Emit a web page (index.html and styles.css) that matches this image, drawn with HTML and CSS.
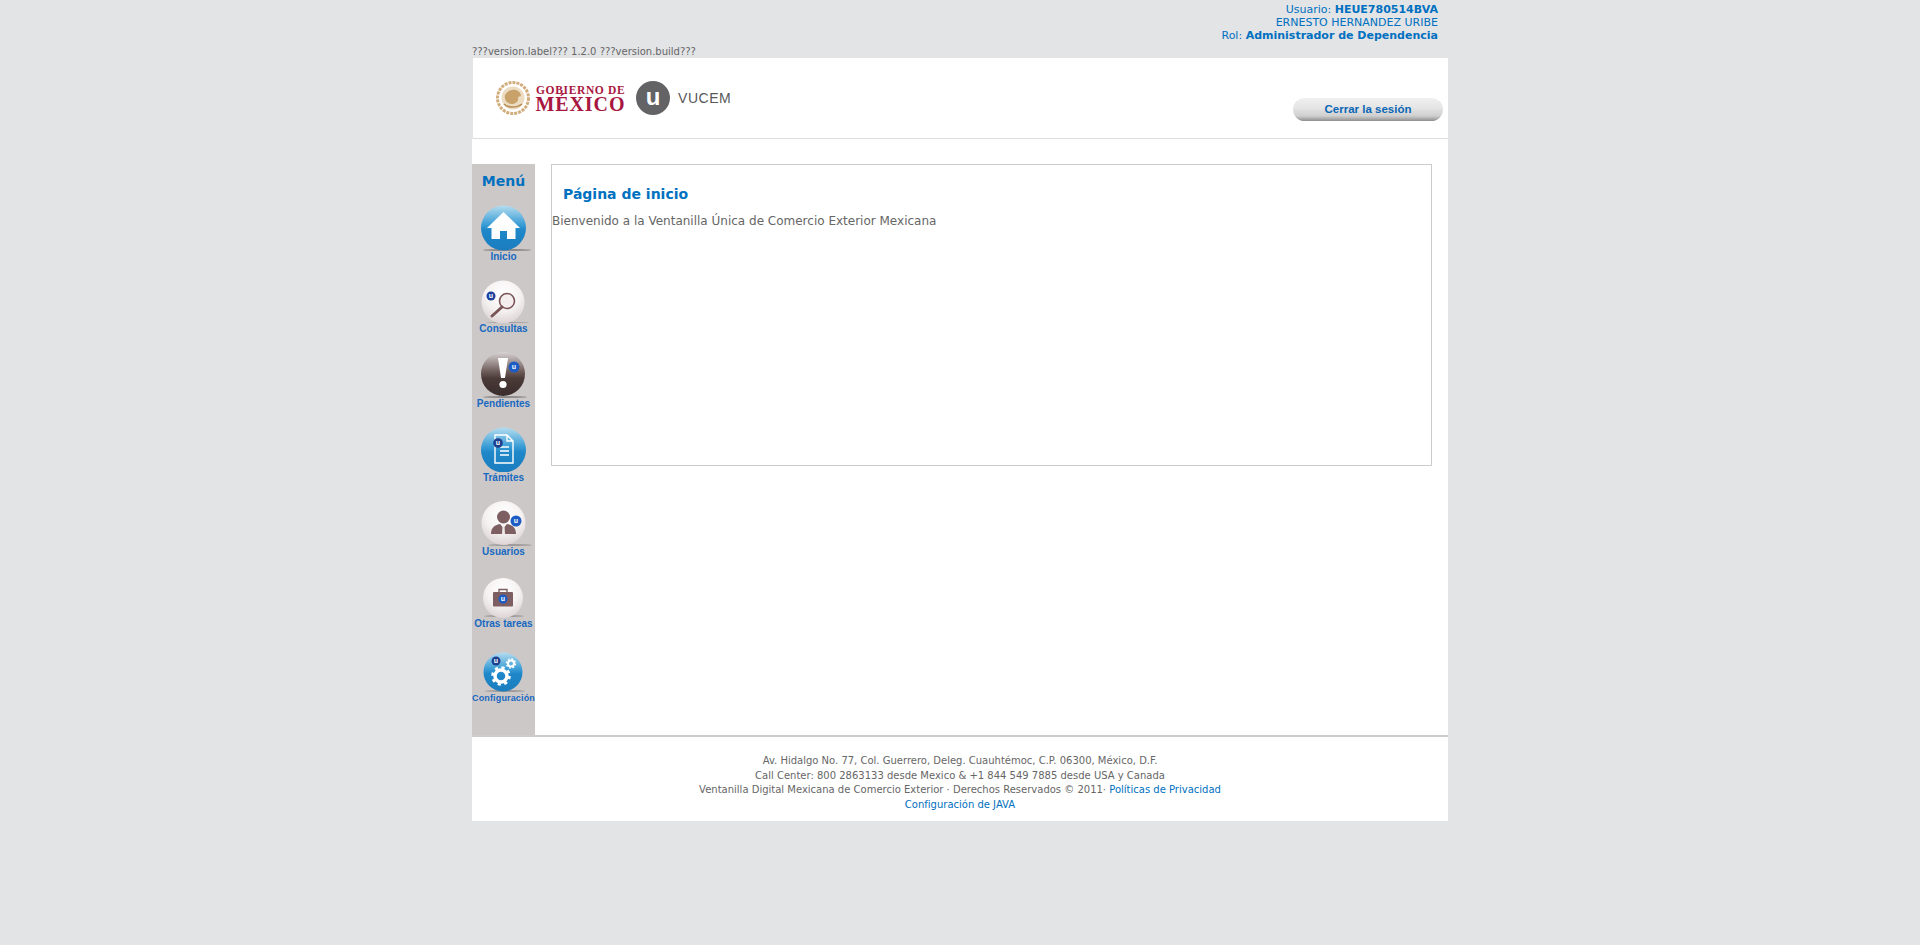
FILE: index.html
```html
<!DOCTYPE html>
<html lang="es">
<head>
<meta charset="utf-8">
<title>Ventanilla Única</title>
<link rel="stylesheet" href="styles.css">
</head>
<body>
<div class="wrapper">
  <div class="topbar">
    <div class="user-info">
      <div>Usuario: <strong>HEUE780514BVA</strong></div>
      <div>ERNESTO HERNANDEZ URIBE</div>
      <div>Rol: <strong>Administrador de Dependencia</strong></div>
    </div>
    <div class="version">???version.label??? 1.2.0 ???version.build???</div>
  </div>
  <header class="header">
    <svg class="logo" width="240" height="50" viewBox="0 0 240 50">
      <circle cx="17" cy="25" r="15.5" fill="none" stroke="#d2ad7c" stroke-width="3" stroke-dasharray="3 1"/>
      <circle cx="17" cy="25" r="11.5" fill="#ecdcc2"/>
      <path d="M9 22c3-5 8-6 11-5 3 1 5 3 5 6l-3 1c1 4-2 7-6 7-4 0-8-3-7-9z" fill="#c9a26b"/>
      <path d="M8 31c4 4 13 4 18 0" fill="none" stroke="#b98f58" stroke-width="1.6"/>
      <text class="logo-top" x="40" y="20.5">GOBIERNO DE</text>
      <text class="logo-main" x="39.500" y="37.500">MÉXICO</text>
      <circle cx="157" cy="25" r="17" fill="#636265"/>
      <text class="logo-u" x="157" y="32" text-anchor="middle">u</text>
      <text class="logo-vucem" x="182" y="30">VUCEM</text>
    </svg>
    <a class="logout">Cerrar la sesión</a>
  </header>
  <main class="main">
    <nav class="sidebar">
      <div class="menu-title">Menú</div>

      <svg class="menu-icon" width="63" height="62" viewBox="0 0 63 62">
        <defs>
          <linearGradient id="blue" x1="0" y1="0" x2="0" y2="1">
            <stop offset="0" stop-color="#b4dcef"/>
            <stop offset=".42" stop-color="#3a9dd6"/>
            <stop offset=".55" stop-color="#1f87c9"/>
            <stop offset="1" stop-color="#1a7dbf"/>
          </linearGradient>
          <radialGradient id="pearl" cx=".5" cy=".3" r=".75">
            <stop offset="0" stop-color="#ffffff"/>
            <stop offset=".55" stop-color="#f5f1f1"/>
            <stop offset="1" stop-color="#d9cfd1"/>
          </radialGradient>
          <linearGradient id="dark" x1="0" y1="0" x2="0" y2="1">
            <stop offset="0" stop-color="#d8d3d3"/>
            <stop offset=".45" stop-color="#6b5a58"/>
            <stop offset=".6" stop-color="#4a3a38"/>
            <stop offset="1" stop-color="#3a2d2c"/>
          </linearGradient>
        </defs>
        <ellipse cx="35" cy="61" rx="24" ry="1" fill="#8e8a8a"/>
        <circle cx="31.500" cy="39" r="22.500" fill="url(#blue)"/>
        <path d="M31.500 23 L48 39 L43.500 39 L43.500 50 L35 50 L35 42 L28 42 L28 50 L19.500 50 L19.500 39 L15 39 Z" fill="#fff"/>
      </svg>
      <div class="menu-label">Inicio</div>

      <svg class="menu-icon" width="63" height="60" viewBox="0 0 63 60">
        <ellipse cx="36" cy="60" rx="22" ry=".8" fill="#8e8a8a"/>
        <circle cx="31" cy="39" r="21.500" fill="url(#pearl)"/>
        <circle cx="35" cy="38" r="7.500" fill="#f4eeee" stroke="#7a5558" stroke-width="1.600"/>
        <path d="M30 44 L20 53" stroke="#7a5558" stroke-width="3" stroke-linecap="round"/>
        <circle cx="19" cy="33" r="4.500" fill="#1d3f9e"/>
        <text class="badge" x="19" y="35" text-anchor="middle">u</text>
      </svg>
      <div class="menu-label">Consultas</div>

      <svg class="menu-icon" width="63" height="63" viewBox="0 0 63 63">
        <ellipse cx="33" cy="62" rx="22" ry="1" fill="#8e8a8a"/>
        <circle cx="31" cy="39" r="22" fill="url(#dark)"/>
        <path d="M26 23 L36 23 L33 43 L29 43 Z" fill="#fff"/>
        <circle cx="31" cy="49.500" r="3.600" fill="#fff"/>
        <circle cx="42" cy="32" r="5.500" fill="#1c5cc4"/>
        <text class="badge" x="42" y="34" text-anchor="middle">u</text>
      </svg>
      <div class="menu-label">Pendientes</div>

      <svg class="menu-icon" width="63" height="62" viewBox="0 0 63 62">
        <circle cx="31.500" cy="40" r="22.500" fill="url(#blue)"/>
        <path d="M23 25 L35 25 L41 31 L41 53 L23 53 Z M35 25 L35 31 L41 31" fill="none" stroke="#fff" stroke-width="1.400"/>
        <path d="M28 37 H37 M28 41 H37 M28 45 H37" stroke="#fff" stroke-width="1.600"/>
        <circle cx="26" cy="33" r="4.800" fill="#1d3f8e"/>
        <text class="badge" x="26" y="35" text-anchor="middle">u</text>
      </svg>
      <div class="menu-label">Trámites</div>

      <svg class="menu-icon" width="63" height="62" viewBox="0 0 63 62">
        <ellipse cx="38" cy="61" rx="22" ry=".8" fill="#8e8a8a"/>
        <circle cx="31.500" cy="39" r="22" fill="url(#pearl)"/>
        <circle cx="31.500" cy="33" r="6.500" fill="#7d5f62"/>
        <path d="M19 50 C19 44 22 41 28 40 L31.500 44 L35 40 C41 41 44 44 44 50 Z" fill="#7d5f62"/>
        <path d="M30.500 42 L32.500 42 L33 50 L30 50 Z" fill="#efe8e8"/>
        <circle cx="44" cy="37" r="5.500" fill="#1c5cc4"/>
        <text class="badge" x="44" y="39" text-anchor="middle">u</text>
      </svg>
      <div class="menu-label">Usuarios</div>

      <svg class="menu-icon" width="63" height="60" viewBox="0 0 63 60">
        <ellipse cx="32" cy="58" rx="20" ry=".8" fill="#8e8a8a"/>
        <circle cx="31" cy="40" r="20" fill="url(#pearl)"/>
        <path d="M27 35 V31.500 H35 V35" fill="none" stroke="#7d5f62" stroke-width="1.400"/>
        <rect x="21" y="34" width="20" height="14.500" rx="1" fill="#7d5f62"/>
        <circle cx="31" cy="41" r="4.500" fill="#1c5cc4"/>
        <text class="badge" x="31" y="43" text-anchor="middle">u</text>
      </svg>
      <div class="menu-label">Otras tareas</div>

      <svg class="menu-icon" width="63" height="62" viewBox="0 0 63 62">
        <ellipse cx="33" cy="61" rx="20" ry=".8" fill="#8e8a8a"/>
        <circle cx="31" cy="42" r="19.500" fill="url(#blue)"/>
        <circle cx="29" cy="46" r="6" fill="none" stroke="#fff" stroke-width="3.500"/>
        <circle cx="29" cy="46" r="8.500" fill="none" stroke="#fff" stroke-width="2.600" stroke-dasharray="3.200 3.500"/>
        <circle cx="39" cy="33.500" r="3" fill="none" stroke="#fff" stroke-width="2"/>
        <circle cx="39" cy="33.500" r="4.500" fill="none" stroke="#fff" stroke-width="1.500" stroke-dasharray="1.800 1.700"/>
        <circle cx="24" cy="31" r="4.500" fill="#1d3f8e"/>
        <text class="badge" x="24" y="33" text-anchor="middle">u</text>
      </svg>
      <div class="menu-label menu-label-small">Configuración</div>
    </nav>
    <section class="panel">
      <h1 class="panel-title">Página de inicio</h1>
      <p class="panel-text">Bienvenido a la Ventanilla Única de Comercio Exterior Mexicana</p>
    </section>
  </main>
  <footer class="footer">
    <div>Av. Hidalgo No. 77, Col. Guerrero, Deleg. Cuauhtémoc, C.P. 06300, México, D.F.</div>
    <div>Call Center: 800 2863133 desde Mexico &amp; +1 844 549 7885 desde USA y Canada</div>
    <div>Ventanilla Digital Mexicana de Comercio Exterior · Derechos Reservados © 2011· <a class="link">Políticas de Privacidad</a></div>
    <div><a class="link">Configuración de JAVA</a></div>
  </footer>
</div>
</body>
</html>
```
FILE: styles.css
```css
* { box-sizing: border-box; }
html, body { margin: 0; padding: 0; }
body {
  background: #e3e4e6;
  font-family: "DejaVu Sans", Verdana, sans-serif;
  font-size: 11px;
  color: #666;
}
.wrapper { width: 976px; margin: 0 auto; }
.topbar { height: 58px; padding-top: 3px; }
.user-info {
  text-align: right;
  padding-right: 10px;
  line-height: 13px;
  color: #0070c0;
}
.user-info strong { font-weight: bold; }
.version { line-height: 13px; font-size: 10px; height: 13px; margin-top: 3px; }
.header {
  display: flex;
  align-items: flex-start;
  width: 975px;
  height: 81px;
  margin-left: 1px;
  padding-top: 15px;
  background: #fff;
  border-bottom: 1px solid #ddd;
}
.logo { display: block; margin-left: 23px; }
.logo-top { font: bold 11.500px "Liberation Serif", serif; fill: #a8173f; letter-spacing: .65px; }
.logo-main { font: bold 20px "Liberation Serif", serif; fill: #a8173f; letter-spacing: .9px; }
.logo-u { font: bold 24px "Liberation Sans", sans-serif; fill: #fff; }
.logo-vucem { font: 14px "Liberation Sans", sans-serif; fill: #58585a; letter-spacing: .55px; }
.logout {
  display: block;
  width: 150px;
  height: 23px;
  margin: 25px 0 0 auto;
  margin-right: 5px;
  border-radius: 12px;
  background: linear-gradient(#f0f0f0 0%, #e4e4e4 45%, #cfcfcf 78%, #8f8f8f 100%);
  font: bold 11.500px/23px "Liberation Sans", sans-serif;
  color: #0a66b4;
  text-align: center;
}
.main {
  display: flex;
  align-items: flex-start;
  height: 596px;
  padding-top: 25px;
  background: #fff;
}
.sidebar {
  width: 63px;
  height: 571px;
  padding-top: 9px;
  background: #cdc8c8;
}
.menu-title {
  height: 16px;
  font-size: 14px;
  font-weight: bold;
  line-height: 16px;
  color: #0070c0;
  text-align: center;
}
.menu-icon { display: block; }
.menu-label {
  height: 12px;
  font: bold 10px/12px "Liberation Sans", sans-serif;
  color: #1668c0;
  text-align: center;
  white-space: nowrap;
}
.menu-label-small { font-size: 9px; letter-spacing: .15px; }
.badge { font: bold 7px "Liberation Sans", sans-serif; fill: #fff; }
.panel {
  width: 881px;
  height: 302px;
  margin-left: 16px;
  border: 1px solid #ccc;
}
.panel-title {
  margin: 21px 0 0 11px;
  font-size: 14px;
  line-height: 17px;
  font-weight: bold;
  color: #0070c0;
}
.panel-text {
  margin: 11px 0 0 0;
  font-size: 12px;
  line-height: 15px;
}
.footer {
  height: 86px;
  padding-top: 17px;
  border-top: 2px solid #ccc;
  background: #fff;
  font-size: 10px;
  line-height: 14.700px;
  text-align: center;
}
.link { color: #0070c0; }
```
